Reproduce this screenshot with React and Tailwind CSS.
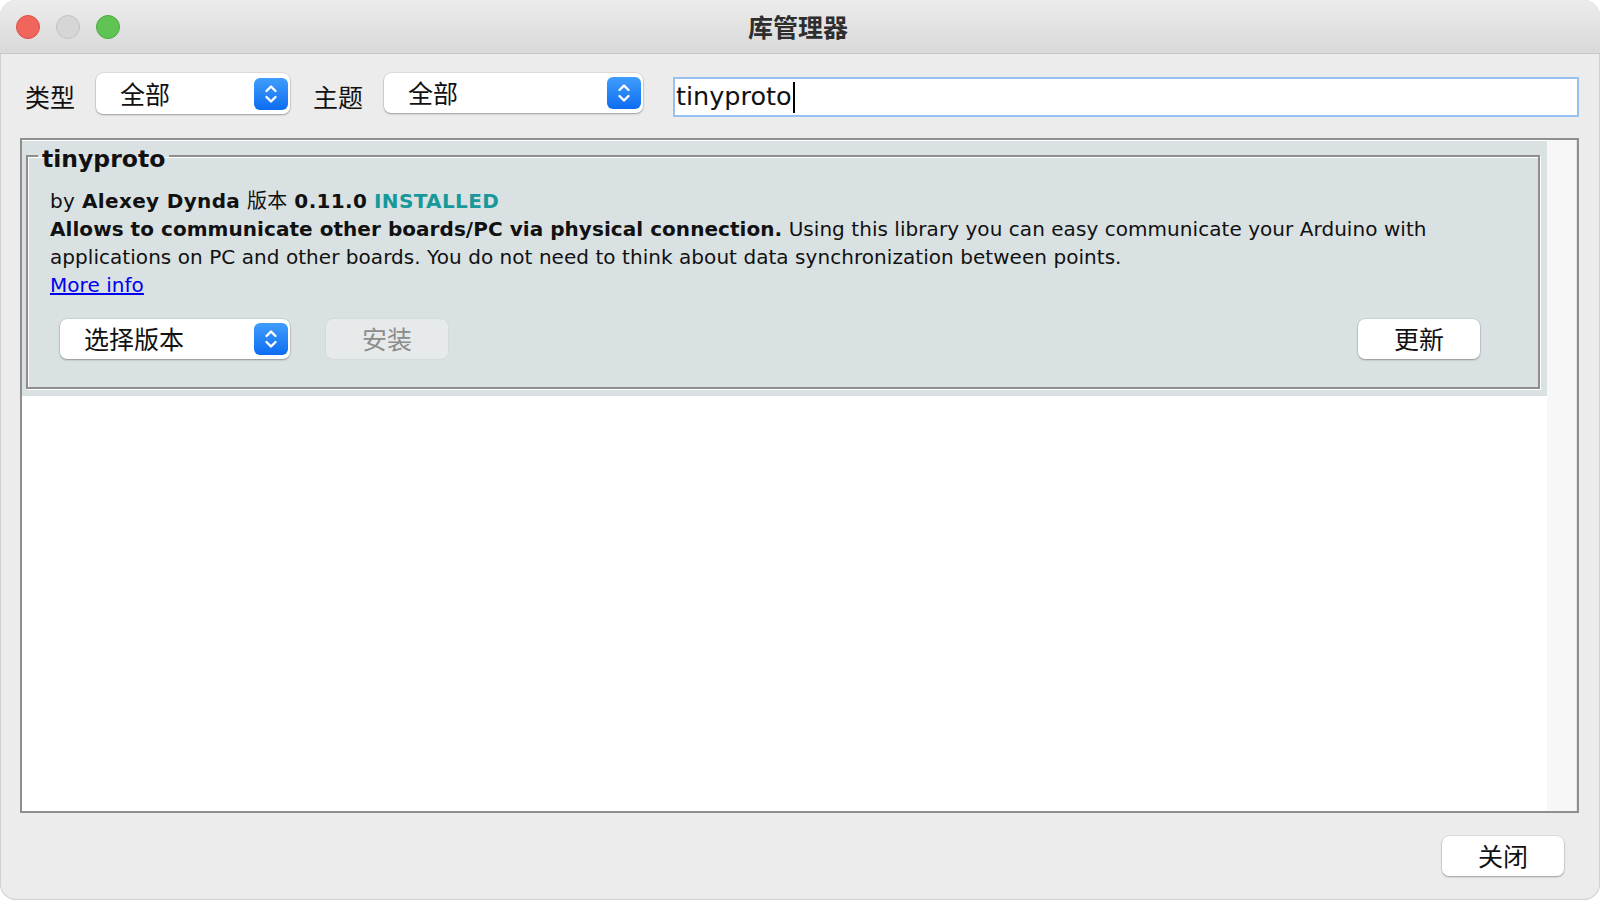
import React from 'react'

const cjk = "font-['Noto_Sans_CJK_SC','Noto_Sans',sans-serif]"
const swing = "font-['DejaVu_Sans','Noto_Sans_CJK_SC',sans-serif]"

function Stepper() {
  return (
    <span className="flex h-[32px] w-[34px] shrink-0 items-center justify-center rounded-[6px] bg-linear-to-b from-[#3f9dfd] to-[#0c6cf1]">
      <svg width="16" height="26" viewBox="0 0 16 26" fill="none" stroke="white" strokeWidth="2.4" strokeLinecap="round" strokeLinejoin="round">
        <path d="M3.5 10l4.5-4.5 4.5 4.5" />
        <path d="M3.5 16l4.5 4.5 4.5-4.5" />
      </svg>
    </span>
  )
}

function Select({ label, className }) {
  return (
    <div className={`flex items-center justify-between rounded-[7px] bg-white pl-[24px] pr-[2px] shadow-[0_0_0_0.5px_rgba(0,0,0,0.12),0_1px_2px_rgba(0,0,0,0.3)] ${className}`}>
      <span className={`${cjk} pb-[1px] text-[25px] leading-none text-[#111]`}>{label}</span>
      <Stepper />
    </div>
  )
}

function Button({ label, disabled }) {
  return (
    <button
      className={`${cjk} flex h-[40px] w-[122px] items-center justify-center rounded-[7px] pb-[2px] text-[25px] leading-none ${
        disabled
          ? 'bg-[#e6eaea] text-[#8c8c8c] shadow-[0_0_0_0.5px_rgba(0,0,0,0.06)]'
          : 'bg-white text-[#111] shadow-[0_0_0_0.5px_rgba(0,0,0,0.12),0_1px_2px_rgba(0,0,0,0.3)]'
      }`}
    >
      {label}
    </button>
  )
}

export default function App() {
  return (
    <div className="h-[900px] w-[1600px] bg-white">
      <div className="flex h-[900px] w-[1600px] flex-col overflow-hidden rounded-[16px] bg-[#ececec] shadow-[inset_0_0_0_1px_#d0d0d0]">
        {/* Title bar */}
        <div className="flex h-[54px] shrink-0 items-center border-b border-[#c6c6c6] bg-linear-to-b from-[#ececec] to-[#d9d9d9]">
          <div className="flex w-[140px] items-center gap-[16px] pl-[16px]">
            <span className="h-[24px] w-[24px] rounded-full border border-[#de4f46] bg-[#f0665d]" />
            <span className="h-[24px] w-[24px] rounded-full border border-[#c2c2c2] bg-[#d6d6d6]" />
            <span className="h-[24px] w-[24px] rounded-full border border-[#4aab3c] bg-[#5fc454]" />
          </div>
          <div className={`${cjk} flex-1 text-center text-[25px] font-semibold text-[#2e2e2e]`}>库管理器</div>
          <div className="w-[144px]" />
        </div>

        {/* Toolbar */}
        <div className="flex h-[84px] shrink-0 items-start pl-[25px] pt-[19px]">
          <span className={`${cjk} mt-[6px] text-[25px] leading-[34px] text-[#111]`}>类型</span>
          <Select label="全部" className="ml-[21px] h-[41px] w-[194px]" />
          <span className={`${cjk} ml-[23px] mt-[6px] text-[25px] leading-[34px] text-[#111]`}>主题</span>
          <Select label="全部" className="ml-[21px] h-[40px] w-[259px]" />
          <div className="ml-[30px] mt-[4px] flex h-[40px] w-[906px] items-center border-2 border-[#97c1f3] bg-white pl-[1px]">
            <span className={`${swing} text-[25.5px] leading-none text-[#111]`}>tinyproto</span>
            <span className="ml-[1px] h-[31px] w-[2px] bg-black" />
          </div>
        </div>

        {/* Library list */}
        <div className="ml-[20px] flex h-[675px] w-[1559px] shrink-0 border-2 border-[#8f8f8f] bg-white">
          <div className="flex flex-1 flex-col pt-[1px]">
            <div className="bg-[#d9e1e2] pb-[7px] pl-[4px] pr-[7px]">
              <fieldset className="border-2 border-[#8e8e8e] pb-[28px] pl-[22px] pr-[20px] pt-[15px] shadow-[inset_1px_1px_0_#fff,1px_1px_0_#fff]">
                <legend className={`${swing} ml-[-12px] px-[4px] pt-[6px] text-[23.5px] font-bold leading-[24px] text-[#111]`}>tinyproto</legend>
                <div className={`${swing} text-[20px] leading-[28px] tracking-[0.05px] text-[#111]`}>
                  <div className="tracking-[0.35px]">
                    by <b>Alexey Dynda</b> <span className={cjk}>版本</span> <b>0.11.0</b>{' '}
                    <b className="text-[#17989b]">INSTALLED</b>
                  </div>
                  <div>
                    <b>Allows to communicate other boards/PC via physical connection.</b> Using this library you can easy
                    communicate your Arduino with
                    <br />
                    applications on PC and other boards. You do not need to think about data synchronization between
                    points.
                  </div>
                  <div>
                    <a className="text-[#0000ee] underline">More info</a>
                  </div>
                </div>
                <div className="mt-[20px] flex items-center">
                  <Select label="选择版本" className="ml-[10px] h-[40px] w-[230px]" />
                  <div className="ml-[36px]">
                    <Button label="安装" disabled />
                  </div>
                  <div className="ml-auto mr-[38px]">
                    <Button label="更新" />
                  </div>
                </div>
              </fieldset>
            </div>
          </div>
          <div className="w-[30px] shrink-0 border-r border-[#e4e4e4] bg-[#f7f7f7]" />
        </div>

        {/* Footer */}
        <div className="flex flex-1 items-start justify-end pr-[36px] pt-[23px]">
          <Button label="关闭" />
        </div>
      </div>
    </div>
  )
}
